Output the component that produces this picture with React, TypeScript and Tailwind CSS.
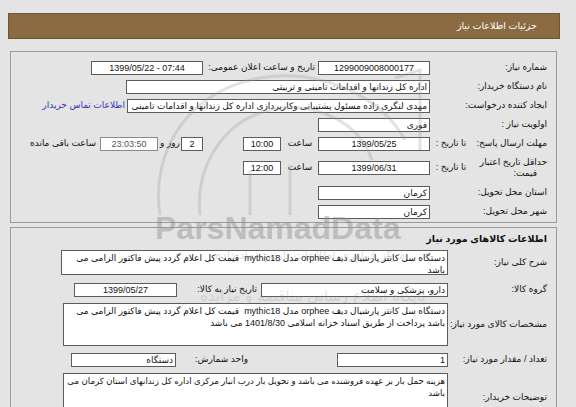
import React from 'react';

interface BoxProps {
  className?: string;
  ltr?: boolean;
  children?: React.ReactNode;
}

// white bordered "input" cell as in the old ASP form
const Box: React.FC<BoxProps> = ({ className = '', ltr, children }) => (
  <div
    dir={ltr ? 'ltr' : undefined}
    className={`shrink-0 bg-white border border-[#5c5c5c] px-[2px] leading-[12px] overflow-hidden ${className}`}
  >
    {children}
  </div>
);

const Row: React.FC<{ className?: string; children: React.ReactNode }> = ({ className = 'h-[19px]', children }) => (
  <div className={`flex items-center ${className}`}>{children}</div>
);

export default function App() {
  return (
    <div
      dir="rtl"
      className="relative w-[576px] h-[407px] overflow-hidden bg-[#e4e4e4] text-[9px] text-[#111] font-['Liberation_Sans','DejaVu_Sans',sans-serif]"
    >
      <div className="pt-[13px] ml-[8px] mr-[16px]">
        <div className="h-[26px] flex items-center pr-[22px] bg-[#8b6b41] border border-[#6e5533] text-white text-[9.5px]">
          جزئیات اطلاعات نیاز
        </div>
      </div>

      {/* panel 1 */}
      <div className="mt-[12px] ml-[10px] mr-[19px] h-[172px] border border-[#9a9a9a] pt-[6px] pr-[9px]">
        <Row>
          <div className="w-[75px] shrink-0">شماره نیاز:</div>
          <div className="w-[42px] shrink-0" />
          <Box ltr className="w-[112px] h-[14px] text-center">1299009008000177</Box>
          <div className="w-[112px] shrink-0 pr-[3px] whitespace-nowrap">تاریخ و ساعت اعلان عمومی:</div>
          <Box ltr className="w-[112px] h-[14px] mr-[3px] text-center">1399/05/22 - 07:44</Box>
        </Row>
        <Row>
          <div className="w-[75px] shrink-0 whitespace-nowrap">نام دستگاه خریدار:</div>
          <div className="w-[42px] shrink-0" />
          <Box className="w-[304px] h-[14px] whitespace-nowrap">اداره کل زندانها و اقدامات تامینی و تربیتی</Box>
        </Row>
        <Row>
          <div className="w-[75px] shrink-0 whitespace-nowrap">ایجاد کننده درخواست:</div>
          <div className="w-[42px] shrink-0" />
          <Box className="w-[303px] h-[14px] whitespace-nowrap">
            مهدی لنگری زاده مسئول پشتیبانی وکارپردازی اداره کل زندانها و اقدامات تامینی
          </Box>
          <span className="mr-[2px] whitespace-nowrap text-[#3434b4]">اطلاعات تماس خریدار</span>
        </Row>
        <Row>
          <div className="w-[75px] shrink-0">اولویت نیاز :</div>
          <div className="w-[42px] shrink-0" />
          <Box className="w-[112px] h-[14px]">فوری</Box>
        </Row>
        <Row>
          <div className="w-[75px] shrink-0 whitespace-nowrap">مهلت ارسال پاسخ:</div>
          <div className="w-[42px] shrink-0 text-center whitespace-nowrap">تا تاریخ :</div>
          <Box ltr className="w-[112px] h-[14px] text-center">1399/05/25</Box>
          <div className="w-[36px] shrink-0 text-center">ساعت</div>
          <Box ltr className="w-[38px] h-[14px] mr-[1px] text-center">10:00</Box>
          <Box ltr className="w-[22px] h-[14px] mr-[40px] text-center">2</Box>
          <div className="w-[22px] shrink-0 text-center whitespace-nowrap">روز و</div>
          <Box ltr className="w-[58px] h-[14px] mr-[1px] text-center bg-[#ebe5b5] text-[#555] border-[#8c8c7a]">23:03:50</Box>
          <div className="mr-[4px] whitespace-nowrap">ساعت باقی مانده</div>
        </Row>
        <Row className="h-[30px]">
          <div className="w-[75px] shrink-0 leading-[11px] whitespace-nowrap">
            حداقل تاریخ اعتبار
            <br />
            <span className="pr-[10px]">قیمت:</span>
          </div>
          <div className="w-[42px] shrink-0 text-center whitespace-nowrap">تا تاریخ :</div>
          <Box ltr className="w-[112px] h-[14px] text-center">1399/06/31</Box>
          <div className="w-[36px] shrink-0 text-center">ساعت</div>
          <Box ltr className="w-[38px] h-[14px] mr-[1px] text-center">12:00</Box>
        </Row>
        <Row>
          <div className="w-[75px] shrink-0 whitespace-nowrap">استان محل تحویل:</div>
          <div className="w-[42px] shrink-0" />
          <Box className="w-[112px] h-[14px]">کرمان</Box>
        </Row>
        <Row>
          <div className="w-[75px] shrink-0 whitespace-nowrap">شهر محل تحویل:</div>
          <div className="w-[42px] shrink-0" />
          <Box className="w-[112px] h-[14px]">کرمان</Box>
        </Row>
      </div>

      {/* panel 2 */}
      <div className="mt-[4px] ml-[10px] mr-[19px] h-[200px] border border-[#9a9a9a] pr-[9px]">
        <div className="h-[22px] flex items-center font-bold text-[9.5px]">اطلاعات کالاهای مورد نیاز</div>
        <Row className="">
          <div className="w-[99px] shrink-0">شرح کلی نیاز:</div>
          <Box className="w-[387px] h-[25px] pt-[1px]">
            دستگاه سل کانتر پارشیال دیف orphee مدل mythic18&nbsp; قیمت کل اعلام گردد پیش فاکتور الزامی می باشد
          </Box>
        </Row>
        <Row className="h-[19px] mt-[5px]">
          <div className="w-[99px] shrink-0">گروه کالا:</div>
          <Box className="w-[187px] h-[14px] whitespace-nowrap">دارو، پزشکی و سلامت</Box>
          <div className="w-[84px] shrink-0 pr-[4px] whitespace-nowrap">تاریخ نیاز به کالا:</div>
          <Box ltr className="w-[103px] h-[14px] text-center">1399/05/27</Box>
        </Row>
        <Row className="mt-[4px]">
          <div className="w-[99px] shrink-0 whitespace-nowrap">مشخصات کالای مورد نیاز:</div>
          <Box className="w-[385px] h-[43px] pt-[1px]">
            دستگاه سل کانتر پارشیال دیف orphee مدل mythic18&nbsp; قیمت کل اعلام گردد پیش فاکتور الزامی می باشد پرداخت از طریق اسناد خزانه اسلامی 1401/8/30 می باشد
          </Box>
        </Row>
        <Row className="h-[20px] mt-[4px]">
          <div className="w-[99px] shrink-0 whitespace-nowrap">تعداد / مقدار مورد نیاز:</div>
          <Box className="w-[111px] h-[14px]">1</Box>
          <div className="w-[89px] shrink-0" />
          <div className="w-[72px] shrink-0 whitespace-nowrap">واحد شمارش:</div>
          <Box className="w-[105px] h-[14px]">دستگاه</Box>
        </Row>
        <Row className="mt-[3px]">
          <div className="w-[99px] shrink-0 whitespace-nowrap">توضیحات خریدار:</div>
          <Box className="w-[385px] h-[50px] pt-[1px] px-[1px] text-[8.6px]">
            هزینه حمل بار بر عهده فروشنده می باشد و تحویل بار درب انبار مرکزی اداره کل زندانهای استان کرمان می باشد
          </Box>
        </Row>
      </div>

      {/* watermark overlay */}
      <div className="pointer-events-none absolute inset-0">
        <svg className="absolute left-0 top-0" width="576" height="407" viewBox="0 0 576 407">
          <g fill="none" stroke="rgba(150,150,150,0.28)" strokeWidth="3">
            <path d="M160 215 C150 150 190 90 260 78 C320 68 380 95 405 140" />
            <path d="M200 215 C195 165 225 120 270 110 C320 100 360 125 372 160" />
            <path d="M395 78 L420 70 L420 150" />
            <path d="M250 215 L250 170 M290 215 L290 165" />
          </g>
        </svg>
        <div className="absolute left-[155px] top-[212px] text-[32px] leading-[32px] font-bold text-[rgba(140,140,140,0.45)] font-['Liberation_Sans',sans-serif]" dir="ltr">
          ParsNamadData
        </div>
        <div className="absolute left-[215px] top-[246px] text-[12px] text-[rgba(130,130,130,0.28)] whitespace-nowrap font-['DejaVu_Sans',sans-serif]">
          مرکز فراوری اطلاعات پارس نماد داده
        </div>
        <div className="absolute left-[200px] top-[285px] text-[15px] text-[rgba(130,130,130,0.22)] whitespace-nowrap font-['DejaVu_Sans',sans-serif]">
          پایگاه اطلاع رسانی مناقصه و مزایده
        </div>
      </div>
    </div>
  );
}
